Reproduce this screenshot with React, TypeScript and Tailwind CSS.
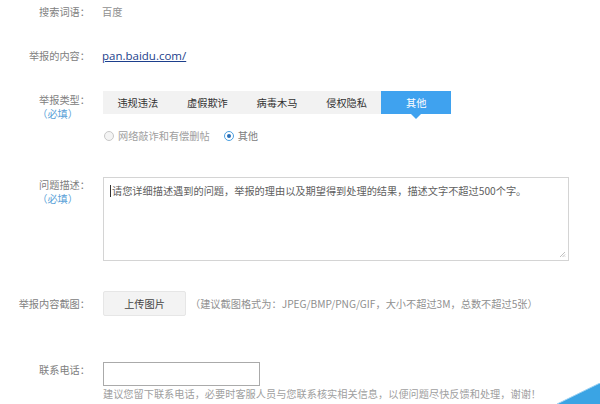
const tabs = ['违规违法', '虚假欺诈', '病毒木马', '侵权隐私', '其他']

const Label = ({ text, required }: { text: string; required?: boolean }) => (
  <div className="w-[90px] shrink-0 text-right leading-[14px] text-[#808080]">
    <div>{text}</div>
    {required && <div className="pr-[12px] text-[#5a9fd8]">（必填）</div>}
  </div>
)

export default function App() {
  return (
    <div
      className="relative h-[404px] w-[600px] overflow-hidden bg-white text-[10.2px]"
      style={{ fontFamily: '"Noto Sans CJK SC", "Noto Sans", sans-serif' }}
    >
      <div className="flex pt-[5px]">
        <Label text="搜索词语：" />
        <div className="ml-[12px] leading-[14px] text-[#909090]">百度</div>
      </div>

      <div className="mt-[29px] flex items-center">
        <Label text="举报的内容：" />
        <a
          href="#"
          className="ml-[12px] text-[11.5px] leading-[16px] text-[#1d3f8c] underline"
          style={{ fontFamily: '"Open Sans", "Noto Sans", sans-serif' }}
        >
          pan.baidu.com/
        </a>
      </div>

      <div className="mt-[27px] flex">
        <div className="pt-[2px]">
          <Label text="举报类型：" required />
        </div>
        <div className="ml-[13px]">
          <div className="flex h-[23px] bg-[#f2f2f2]">
            {tabs.map((t, i) => (
              <div
                key={t}
                className={
                  i === tabs.length - 1
                    ? 'relative flex w-[69.6px] items-center justify-center bg-[#3fa2ef] text-white'
                    : 'flex w-[69.6px] items-center justify-center text-[#333]'
                }
              >
                {t}
                {i === tabs.length - 1 && (
                  <span className="absolute left-1/2 top-full -ml-[5px] h-0 w-0 border-x-[5px] border-t-[5px] border-x-transparent border-t-[#3fa2ef]" />
                )}
              </div>
            ))}
          </div>
          <div className="mt-[15px] flex items-center text-[#a0a0a0]">
            <span className="ml-[1px] h-[10px] w-[10px] rounded-full border border-[#c8c8c8] bg-[#f4f4f4]" />
            <span className="ml-[4px] leading-[14px]">网络敲诈和有偿删帖</span>
            <span className="ml-[14px] flex h-[10px] w-[10px] items-center justify-center rounded-full border border-[#4a9fe0] bg-white">
              <span className="h-[4px] w-[4px] rounded-full bg-[#2a6fb8]" />
            </span>
            <span className="ml-[4px] leading-[14px] text-[#808080]">其他</span>
          </div>
        </div>
      </div>

      <div className="mt-[34px] flex">
        <div className="pt-[1px]">
          <Label text="问题描述：" required />
        </div>
        <div className="relative ml-[13px] h-[84px] w-[466px] border border-[#d4d4d4] bg-white">
          <div className="flex items-center pl-[6px] pt-[6px] leading-[14px] text-[#606060]">
            <span className="mr-[1px] inline-block h-[12px] w-[1px] bg-[#333]" />
            请您详细描述遇到的问题，举报的理由以及期望得到处理的结果，描述文字不超过500个字。
          </div>
          <svg className="absolute bottom-[2px] right-[2px]" width="7" height="7" viewBox="0 0 7 7">
            <path d="M6 1L1 6M6 3.5L3.5 6M6 5.5L5.5 6" stroke="#b0b0b0" strokeWidth="0.8" />
          </svg>
        </div>
      </div>

      <div className="mt-[30px] flex items-center">
        <Label text="举报内容截图：" />
        <div className="ml-[13px] flex h-[25px] w-[83px] items-center justify-center rounded-[2px] border border-[#e6e6e6] bg-[#f3f3f3] text-[#444]">
          上传图片
        </div>
        <div className="ml-[4px] text-[#909090]">（建议截图格式为：JPEG/BMP/PNG/GIF，大小不超过3M，总数不超过5张）</div>
      </div>

      <div className="mt-[46px] flex">
        <div className="pt-[1px]">
          <Label text="联系电话：" />
        </div>
        <div className="ml-[13px]">
          <div className="h-[24px] w-[157px] border border-[#aaa] bg-white" />
          <div className="mt-[1px] whitespace-nowrap leading-[14px] text-[#a0a0a0]">
            建议您留下联系电话，必要时客服人员与您联系核实相关信息，以便问题尽快反馈和处理，谢谢！
          </div>
        </div>
      </div>

      <svg className="absolute bottom-0 right-0" width="43" height="21" viewBox="0 0 43 21">
        <polygon points="0,21 43,0 43,21" fill="#3aa4e4" />
        <polyline points="0,21 43,0" stroke="#9fd2f2" strokeWidth="1" fill="none" />
      </svg>
    </div>
  )
}
